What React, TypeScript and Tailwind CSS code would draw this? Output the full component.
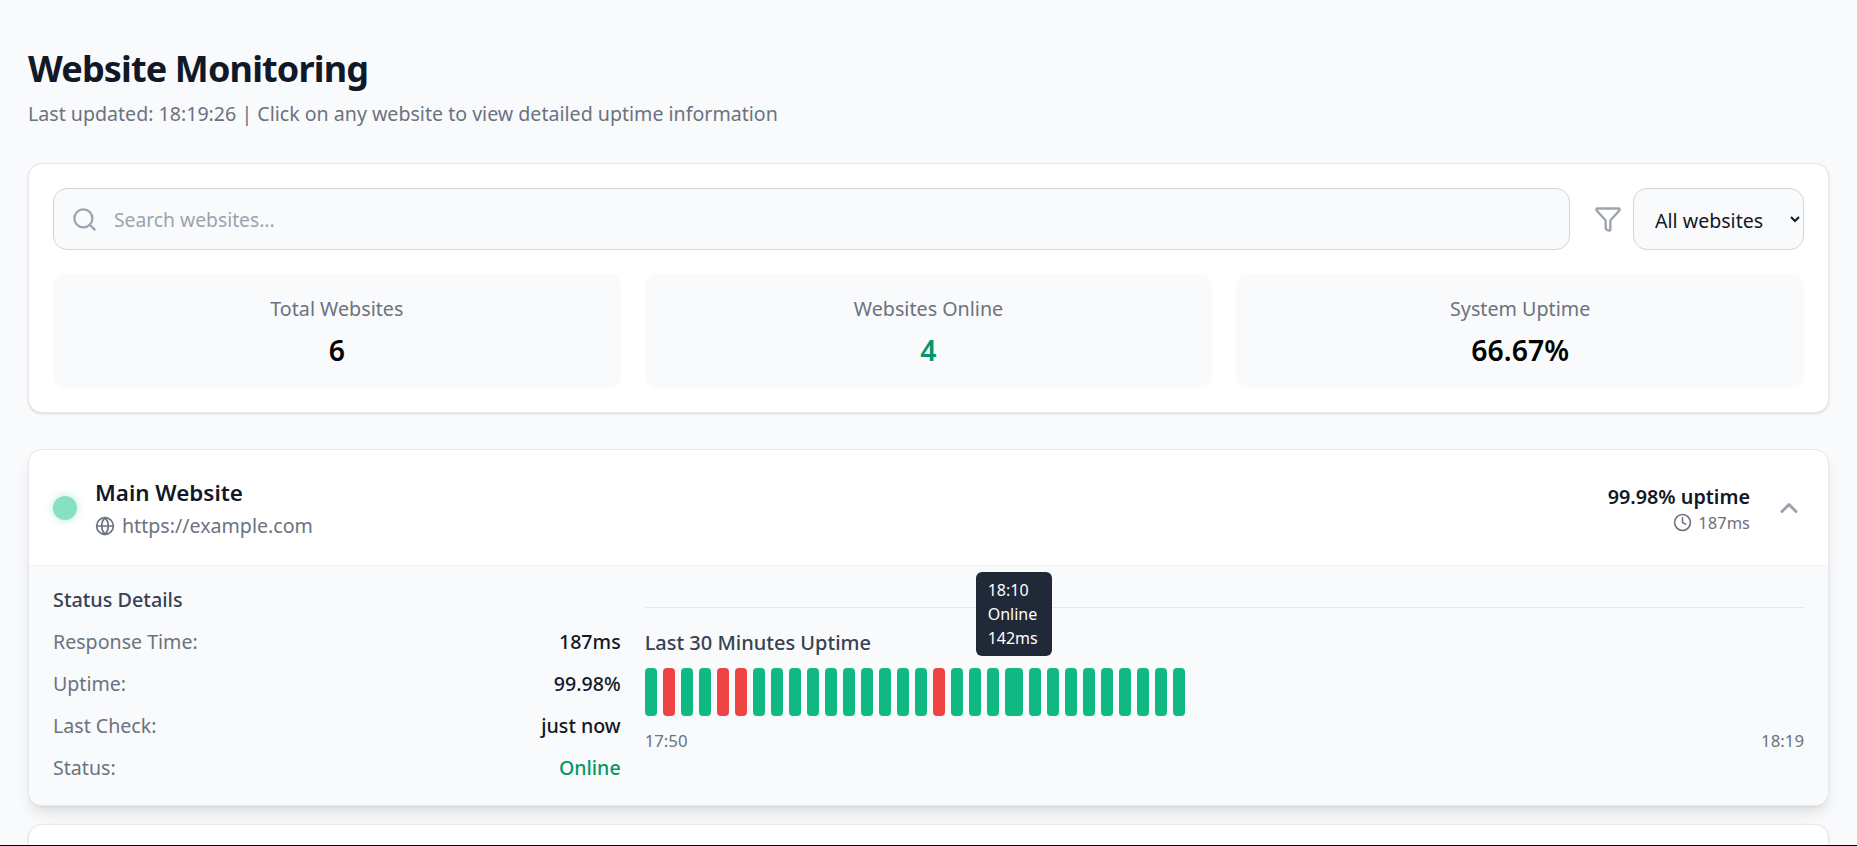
import React from "react";
import { Search, Filter, Globe, Clock, ChevronUp } from "lucide-react";

const down = [1, 4, 5, 16];
const bars = Array.from({ length: 30 }, (_, i) => i);

const Stat = ({ label, value, tone }: { label: string; value: string; tone: string }) => (
  <div className="flex h-[114px] flex-col items-center rounded-xl bg-[#f9fafb] pt-[21px]">
    <div className="text-[19.7px] leading-[28px] text-[#6b7280]">{label}</div>
    <div className={`mt-[9px] text-[28.4px] font-semibold leading-[36px] ${tone}`}>{value}</div>
  </div>
);

const Row = ({ label, value, tone }: { label: string; value: string; tone: string }) => (
  <div className="flex h-[42px] items-center justify-between pt-[2px] text-[19.6px]">
    <span className="text-[#6b7280]">{label}</span>
    <span className={`font-medium ${tone}`}>{value}</span>
  </div>
);

export default function App() {
  return (
    <div
      className="h-screen overflow-hidden border-b border-black bg-[#f9fafb] px-[28px] pt-[45px]"
      style={{ fontFamily: '"Noto Sans", sans-serif' }}
    >
      {/* Title */}
      <h1 className="text-[36px] font-bold leading-[48px] tracking-[-0.85px] text-[#111827]">Website Monitoring</h1>
      <p className="mt-[7px] text-[19.6px] leading-[28px] text-[#6b7280]">
        Last updated: 18:19:26 | Click on any website to view detailed uptime information
      </p>

      {/* Filters and summary */}
      <div className="mt-[35px] rounded-[14px] border border-[#e5e7eb] bg-white p-[24px] shadow-sm">
        <div className="flex items-center">
          <div className="flex h-[62px] flex-1 items-center rounded-[14px] border border-[#d1d5db] bg-[#f9fafb] pl-[17px]">
            <Search className="h-[27px] w-[27px] text-[#9ca3af]" />
            <input
              className="ml-[16px] flex-1 bg-transparent pt-[3px] text-[19.3px] outline-none placeholder:text-[#9ca3af]"
              placeholder="Search websites..."
            />
          </div>
          <Filter className="ml-[24px] h-[28px] w-[28px] text-[#9ca3af]" />
          <select className="ml-[11px] h-[62px] w-[171px] rounded-[14px] border border-[#d1d5db] bg-[#f9fafb] pl-[17px] pt-[2px] text-[19.6px] text-[#111827]">
            <option>All websites</option>
          </select>
        </div>
        <div className="mt-[24px] grid grid-cols-3 gap-[24px]">
          <Stat label="Total Websites" value="6" tone="text-black" />
          <Stat label="Websites Online" value="4" tone="text-[#059669]" />
          <Stat label="System Uptime" value="66.67%" tone="text-black" />
        </div>
      </div>

      {/* Expanded website */}
      <div className="mt-[36px] overflow-hidden rounded-[14px] border border-[#e5e7eb] bg-white shadow-lg">
        <div className="flex h-[115px] items-center pl-[24px] pr-[25px]">
          <div className="h-[24px] w-[24px] rounded-full bg-[#87e0bf] shadow-[0_0_8px_rgba(16,185,129,0.3)]" />
          <div className="ml-[18px] pt-[2px]">
            <div className="text-[22.4px] font-semibold leading-[32px] text-[#111827]">Main Website</div>
            <div className="mt-[3px] flex items-center text-[19.6px] leading-[28px] text-[#6b7280]">
              <Globe className="mr-[7px] h-[20px] w-[20px]" />
              https://example.com
            </div>
          </div>
          <div className="ml-auto pt-[2px] text-right">
            <div className="text-[19.8px] font-semibold leading-[28px] text-[#111827]">99.98% uptime</div>
            <div className="flex items-center justify-end text-[16.5px] leading-[24px] text-[#6b7280]">
              <Clock className="mr-[6px] h-[19px] w-[19px]" />
              187ms
            </div>
          </div>
          <ChevronUp strokeWidth={2.5} className="ml-[25px] h-[28px] w-[28px] text-[#9ca3af]" />
        </div>
        <div className="grid h-[240px] grid-cols-3 gap-[24px] border-t border-[#f3f4f6] bg-[#f9fafb] px-[24px]">
          <div className="pt-[20px]">
            <div className="mb-[6px] text-[19.8px] font-medium leading-[28px] text-[#374151]">Status Details</div>
            <Row label="Response Time:" value="187ms" tone="text-[#111827]" />
            <Row label="Uptime:" value="99.98%" tone="text-[#111827]" />
            <Row label="Last Check:" value="just now" tone="text-[#111827]" />
            <Row label="Status:" value="Online" tone="text-[#059669]" />
          </div>
          <div className="col-span-2 pt-[41px]">
            <div className="border-t border-[#e5e7eb] pt-[21px]">
              <div className="text-[20px] font-medium leading-[28px] text-[#374151]">Last 30 Minutes Uptime</div>
              <div className="mt-[11px] flex gap-[6px]">
                {bars.map((i) => (
                  <div
                    key={i}
                    className={`relative h-[48px] rounded-[4px] ${i === 20 ? "w-[18px]" : "w-[12px]"} ${
                      down.includes(i) ? "bg-[#ef4444]" : "bg-[#10b981]"
                    }`}
                  >
                    {i === 20 && (
                      <div className="absolute bottom-full left-1/2 mb-[12px] w-[76px] -translate-x-1/2 rounded-[6px] bg-[#1f2937] px-[12px] py-[6px] text-[16px] leading-[24px] text-white">
                        <div>18:10</div>
                        <div>Online</div>
                        <div>142ms</div>
                      </div>
                    )}
                  </div>
                ))}
              </div>
              <div className="mt-[13px] flex justify-between text-[16.8px] leading-[24px] text-[#6b7280]">
                <span>17:50</span>
                <span>18:19</span>
              </div>
            </div>
          </div>
        </div>
      </div>

      {/* Next website, cut off by the window */}
      <div className="mt-[18px] h-[100px] rounded-[14px] border border-[#e5e7eb] bg-white shadow-sm" />
    </div>
  );
}
